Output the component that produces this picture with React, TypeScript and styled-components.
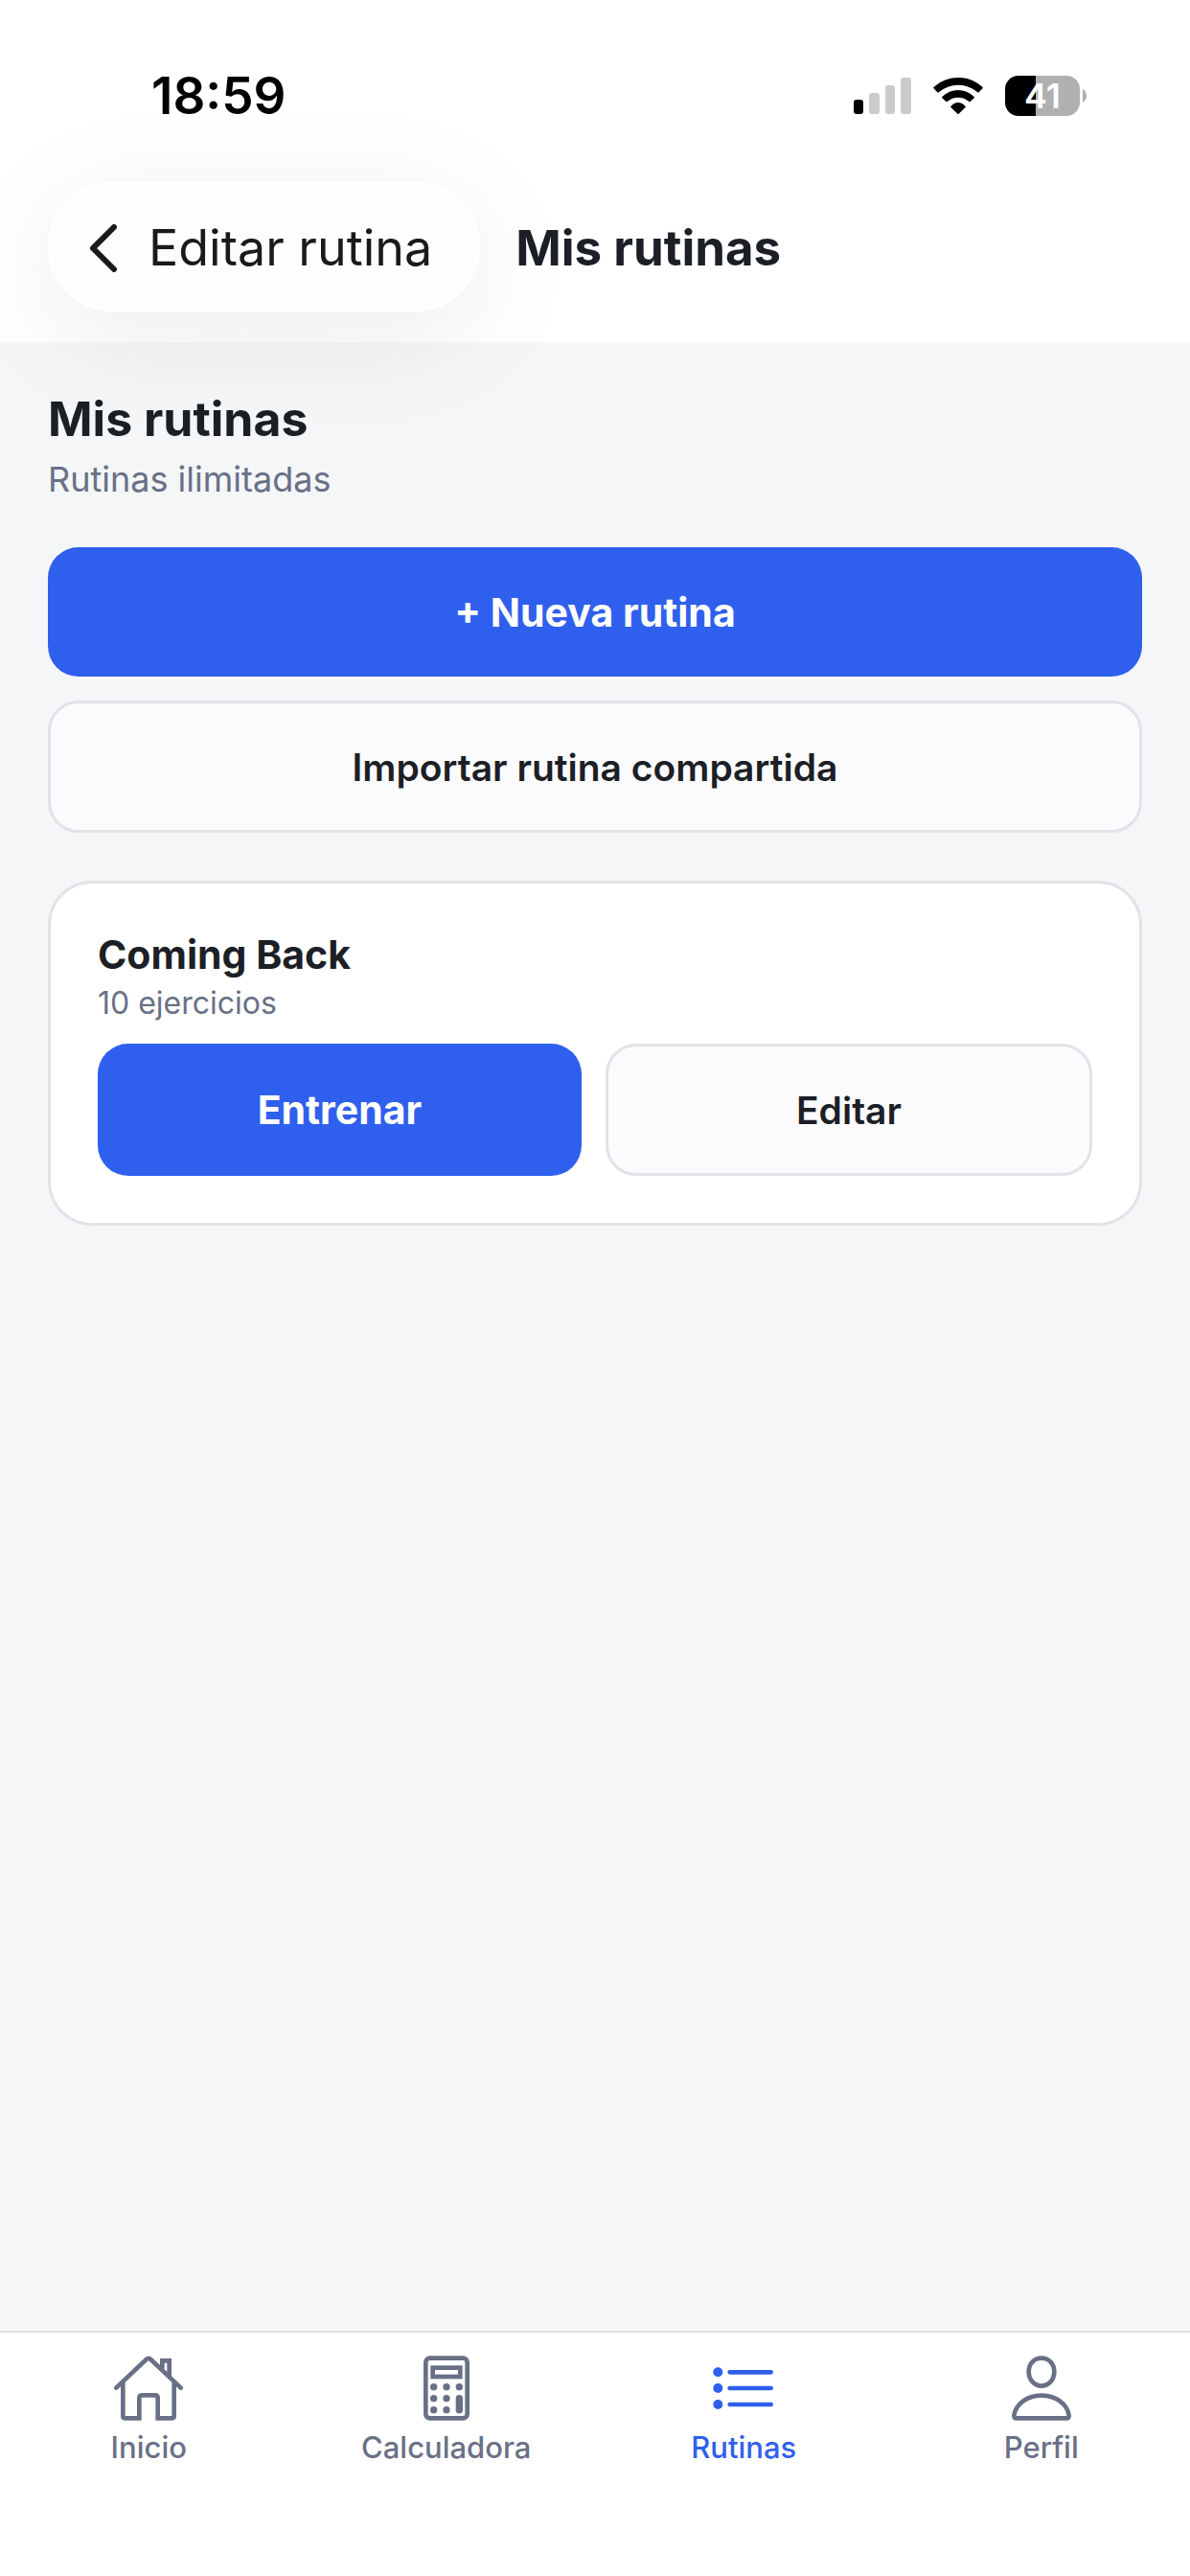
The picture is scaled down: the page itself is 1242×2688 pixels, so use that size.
import { ReactNode } from "react";
import styled, { createGlobalStyle } from "styled-components";

interface Routine {
    id: number;
    name: string;
    exercises: number;
}

interface TabItem {
    label: string;
    icon: ReactNode;
    active?: boolean;
}

const routines: Routine[] = [{ id: 1, name: "Coming Back", exercises: 10 }];
const batteryLevel = 41;

const HouseIcon = () => (
    <SC.TabIcon viewBox="0 0 216 216">
        <path d="M7 107 L101 18 Q108 11 115 18 L209 107" />
        <path d="M28 92 V196 Q28 202 34 202 H79 V139 Q79 130 88 130 H128 Q137 130 137 139 V202 H182 Q188 202 188 196 V92" />
        <path d="M151 46 V22 H173 V72" />
    </SC.TabIcon>
);

const CalculatorIcon = () => (
    <SC.TabIcon viewBox="0 0 216 216">
        <rect x="43" y="14" width="130" height="188" rx="13" />
        <rect x="65" y="44" width="86" height="28" />
        <g fill="currentColor" stroke="none">
            <circle cx="68" cy="104" r="11" />
            <circle cx="108" cy="104" r="11" />
            <circle cx="148" cy="104" r="11" />
            <circle cx="68" cy="140" r="11" />
            <circle cx="108" cy="140" r="11" />
            <circle cx="68" cy="176" r="11" />
            <circle cx="108" cy="176" r="11" />
            <rect x="137" y="129" width="22" height="58" rx="11" />
        </g>
    </SC.TabIcon>
);

const ListIcon = () => (
    <SC.TabIcon viewBox="0 0 216 216">
        <path d="M65 58 H194 M65 108 H194 M65 159 H194" />
        <g fill="currentColor" stroke="none">
            <circle cx="28" cy="58" r="15" />
            <circle cx="28" cy="108" r="15" />
            <circle cx="28" cy="159" r="15" />
        </g>
    </SC.TabIcon>
);

const PersonIcon = () => (
    <SC.TabIcon viewBox="0 0 216 216">
        <path d="M108 14 C131 14 148 32 148 56 C148 82 130 101 108 101 C86 101 68 82 68 56 C68 32 85 14 108 14 Z" />
        <path d="M30 202 Q21 202 22 193 C27 160 60 131 108 131 C156 131 189 160 194 193 Q195 202 186 202 Z" />
    </SC.TabIcon>
);

const tabs: TabItem[] = [
    { label: "Inicio", icon: <HouseIcon /> },
    { label: "Calculadora", icon: <CalculatorIcon /> },
    { label: "Rutinas", icon: <ListIcon />, active: true },
    { label: "Perfil", icon: <PersonIcon /> },
];

const StatusBar = () => (
    <SC.StatusBar>
        <SC.Time>18:59</SC.Time>
        <SC.StatusIcons>
            <svg width="60" height="38" viewBox="0 0 60 38" fill="#cbcbcb">
                <rect x="0" y="23" width="10" height="15" rx="3" fill="#000" />
                <rect x="16" y="16" width="11" height="22" rx="3" />
                <rect x="33" y="8" width="10" height="30" rx="3" />
                <rect x="49" y="0" width="11" height="38" rx="3" />
            </svg>
            <svg width="52" height="38" viewBox="0 0 156 114">
                <path d="M1 33 Q0 31 2 29 Q34 0 78 0 Q122 0 154 29 Q156 31 155 33 L143 46 Q141 48 139 46 Q112 23 78 23 Q44 23 17 46 Q15 48 13 46 Z" />
                <path d="M28 60 Q50 39 78 39 Q106 39 128 60 Q130 62 128 64 L116 75 Q114 77 112 75 Q97 62 78 62 Q59 62 44 75 Q42 77 40 75 L28 64 Q26 62 28 60 Z" />
                <path d="M55 90 Q65 78 78 78 Q91 78 101 90 Q102 92 100 94 L80 113 Q78 115 76 113 L56 94 Q54 92 55 90 Z" />
            </svg>
            <SC.BatteryBox>
                <SC.Battery $level={batteryLevel}>{batteryLevel}</SC.Battery>
                <svg width="4" height="14" viewBox="0 0 4 14" fill="#b0b0b0">
                    <path d="M0 0 Q4 2 4 7 Q4 12 0 14 Z" />
                </svg>
            </SC.BatteryBox>
        </SC.StatusIcons>
    </SC.StatusBar>
);

const RoutineCard = ({ routine }: { routine: Routine }) => (
    <SC.Card>
        <SC.CardTitle>{routine.name}</SC.CardTitle>
        <SC.CardMeta>{routine.exercises} ejercicios</SC.CardMeta>
        <SC.CardActions>
            <SC.PrimaryButton type="button">Entrenar</SC.PrimaryButton>
            <SC.SecondaryButton type="button">Editar</SC.SecondaryButton>
        </SC.CardActions>
    </SC.Card>
);

const App = () => {
    return (
        <SC.Screen>
            <GlobalStyle />
            <SC.Header>
                <StatusBar />
                <SC.NavBar>
                    <SC.BackButton type="button">
                        <svg width="29" height="50" viewBox="0 0 29 50" fill="none" stroke="#1a1a1a" strokeWidth="6" strokeLinecap="round" strokeLinejoin="round">
                            <path d="M25 3 L3 25 L25 47" />
                        </svg>
                        Editar rutina
                    </SC.BackButton>
                    <SC.NavTitle>Mis rutinas</SC.NavTitle>
                </SC.NavBar>
            </SC.Header>
            <SC.Content>
                <SC.Heading>Mis rutinas</SC.Heading>
                <SC.Subheading>Rutinas ilimitadas</SC.Subheading>
                <SC.Actions>
                    <SC.PrimaryButton type="button">+ Nueva rutina</SC.PrimaryButton>
                    <SC.SecondaryButton type="button">Importar rutina compartida</SC.SecondaryButton>
                </SC.Actions>
                {routines.map((routine) => (
                    <RoutineCard key={routine.id} routine={routine} />
                ))}
            </SC.Content>
            <SC.TabBar>
                {tabs.map((tab) => (
                    <SC.Tab key={tab.label} href="#" $active={tab.active} aria-current={tab.active ? "page" : undefined}>
                        {tab.icon}
                        {tab.label}
                    </SC.Tab>
                ))}
            </SC.TabBar>
        </SC.Screen>
    )
}

const GlobalStyle = createGlobalStyle`
    * {
        box-sizing: border-box;
    }
    body {
        margin: 0;
        font-family: Inter, "Liberation Sans", sans-serif;
        color: #1c1f26;
        background: #f4f6f8;
    }
    h1, h2, p {
        margin: 0;
    }
    svg {
        display: block;
        flex-shrink: 0;
    }
`;

const Button = styled.button`
    width: 100%;
    border-radius: 32px;
    font-family: inherit;
    cursor: pointer;
`;

const SC = {
    Screen: styled.div`
        min-height: 100vh;
        display: flex;
        flex-direction: column;
    `,
    Header: styled.header`
        position: relative;
        z-index: 1;
        background: #fff;
        padding-bottom: 32px;
    `,
    StatusBar: styled.div`
        display: flex;
        justify-content: space-between;
        align-items: center;
        padding: 68px 108px 58px 158px;
    `,
    Time: styled.span`
        font-size: 53px;
        line-height: 64px;
        font-weight: 600;
        color: #000;
    `,
    StatusIcons: styled.div`
        display: flex;
        align-items: center;
        gap: 23px;
    `,
    BatteryBox: styled.div`
        display: flex;
        align-items: center;
        gap: 3px;
    `,
    Battery: styled.span<{ $level: number }>`
        width: 78px;
        height: 42px;
        border-radius: 14px;
        background: linear-gradient(90deg, #000 ${(props) => props.$level}%, #b0b0b0 ${(props) => props.$level}%);
        color: #fff;
        font-size: 36px;
        line-height: 42px;
        font-weight: 600;
        text-align: center;
    `,
    NavBar: styled.div`
        display: flex;
        align-items: center;
        gap: 37px;
        padding: 0 50px;
    `,
    BackButton: styled.button`
        display: flex;
        align-items: center;
        gap: 32px;
        height: 135px;
        padding: 2px 48px 0 42px;
        border: 2px solid #fff;
        border-radius: 68px;
        background: #fdfdfd;
        box-shadow: 0 24px 120px rgba(0, 0, 0, 0.08);
        font-family: inherit;
        font-size: 52px;
        color: #1a1a1a;
        cursor: pointer;
    `,
    NavTitle: styled.h1`
        padding-top: 2px;
        font-size: 51px;
        line-height: 64px;
        font-weight: 700;
    `,
    Content: styled.main`
        flex: 1;
        padding: 50px 50px 48px;
    `,
    Heading: styled.h2`
        font-size: 50px;
        line-height: 60px;
        font-weight: 700;
    `,
    Subheading: styled.p`
        margin-top: 9px;
        font-size: 36px;
        line-height: 48px;
        color: #697086;
    `,
    Actions: styled.div`
        display: flex;
        flex-direction: column;
        gap: 25px;
        margin: 47px 0 50px;
    `,
    PrimaryButton: styled(Button)`
        min-height: 135px;
        border: 0;
        background: #2f5fed;
        color: #fff;
        font-size: 41px;
        font-weight: 700;
    `,
    SecondaryButton: styled(Button)`
        min-height: 138px;
        border: 3px solid #e1e3e7;
        background: #fbfbfd;
        color: #1c1f26;
        font-size: 39px;
        font-weight: 600;
    `,
    Card: styled.section`
        padding: 49px;
        border: 3px solid #e1e3e7;
        border-radius: 46px;
        background: #fff;
    `,
    CardTitle: styled.h2`
        font-size: 41px;
        line-height: 50px;
        font-weight: 700;
    `,
    CardMeta: styled.p`
        margin-top: 2px;
        font-size: 32px;
        line-height: 48px;
        color: #697086;
    `,
    CardActions: styled.div`
        display: flex;
        gap: 25px;
        margin-top: 18px;
    `,
    TabBar: styled.nav`
        display: flex;
        height: 256px;
        padding-top: 22px;
        border-top: 2px solid #dfe1e5;
        background: #fff;
    `,
    Tab: styled.a<{ $active?: boolean }>`
        flex: 1;
        display: flex;
        flex-direction: column;
        align-items: center;
        gap: 8px;
        font-size: 31px;
        line-height: 36px;
        font-weight: 500;
        text-decoration: none;
        color: ${(props) => (props.$active ? "#2f5fed" : "#697086")};
    `,
    TabIcon: styled.svg`
        width: 72px;
        height: 72px;
        fill: none;
        stroke: currentColor;
        stroke-width: 14;
        stroke-linecap: round;
    `
};

export default App;
